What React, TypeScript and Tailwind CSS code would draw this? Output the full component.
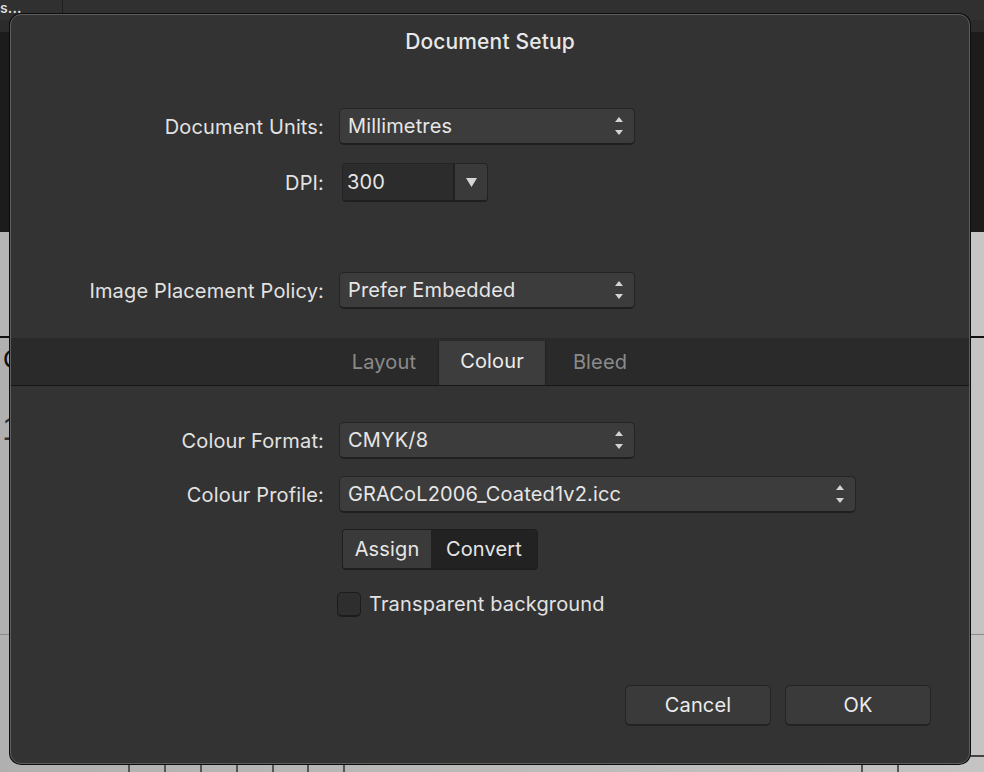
import React from 'react';

const font = "font-['Inter','Noto_Sans',sans-serif]";

function UpDown() {
  return (
    <svg width="8" height="18" viewBox="0 0 8 18" className="shrink-0">
      <polygon points="4,0 8,5 0,5" fill="#d4d4d4" />
      <polygon points="0,13 8,13 4,18" fill="#d4d4d4" />
    </svg>
  );
}

function Select({ value, width }: { value: string; width: string }) {
  return (
    <div
      className={`${width} h-[37px] flex items-center justify-between pl-[8px] pr-[11px] rounded-[5px] bg-[#3c3c3c] border border-[#242424] border-b-[2px] border-b-[#1f1f1f] text-[#e6e6e6]`}
    >
      <span>{value}</span>
      <UpDown />
    </div>
  );
}

function Row({ label, children }: { label: string; children: React.ReactNode }) {
  return (
    <div className="flex items-center gap-[15px]">
      <div className="w-[313px] text-right text-[#e2e2e2]">{label}</div>
      {children}
    </div>
  );
}

function Tab({ label, active }: { label: string; active?: boolean }) {
  return (
    <div
      className={`w-[108px] flex items-center justify-center ${
        active
          ? 'self-end h-[44px] pb-[4px] bg-[#3d3d3d] text-[#ececec] border-x border-[#222]'
          : 'h-full text-[#8a8a8a]'
      }`}
    >
      {label}
    </div>
  );
}

function Backdrop() {
  const cells = [128, 164, 200, 236, 272, 307, 343, 861, 897];
  return (
    <div className="flex flex-col h-[772px] w-[984px] overflow-hidden">
      <div className="h-[20px] bg-[#303030] flex">
        <div className="w-[63px] border-r border-[#1e1e1e] text-[#dedede] text-[14px] font-semibold leading-[16px]">
          s...
        </div>
      </div>
      <div className="h-[12px] bg-[#2b2b2b]" />
      <div className="h-[200px] bg-[#1c1c1c]" />
      <div className="h-[106px] bg-gradient-to-r from-[#b4b4b4] to-[#c6c6c6] border-b-[2px] border-[#111]" />
      <div className="flex-1 relative bg-gradient-to-r from-[#b0b0b0] to-[#c4c4c4]">
        <div className="pl-[3px] pt-[2px] text-[26px] text-[#111] font-['Liberation_Sans',sans-serif]">C</div>
        <div className="pl-[2px] pt-[24px] text-[34px] text-[#333] font-['Liberation_Sans',sans-serif]">1</div>
        <div className="mt-[180px] h-[1px] bg-[#8a8a8a]" />
        <div className="absolute left-0 right-0 top-[427px] h-[10px]">
          {cells.map((x) => (
            <div key={x} className="absolute top-0 bottom-0 w-[2px] bg-[#555]" style={{ left: x }} />
          ))}
        </div>
        <div className="absolute right-0 top-[417px] w-[16px] h-[2px] bg-[#444]" />
      </div>
    </div>
  );
}

export default function App() {
  return (
    <div className={`relative w-[984px] h-[772px] overflow-hidden ${font} text-[20px] tracking-[0.15px]`}>
      <Backdrop />

      {/* Dialog */}
      <div className="absolute left-[10px] top-[14px] w-[960px] h-[750px] rounded-[11px] bg-[#333333] border border-[#5e5e5e] shadow-[0_0_0_1px_#0d0d0d] flex flex-col overflow-hidden">
        <div className="pt-[15px] h-[40px] leading-[24px] text-center text-[#e8e8e8] text-[21px] font-medium">
          Document Setup
        </div>

        <div className="mt-[53px]">
          <Row label="Document Units:">
            <Select value="Millimetres" width="w-[296px]" />
          </Row>
        </div>

        <div className="mt-[18px]">
          <Row label="DPI:">
            <div className="ml-[3px] w-[146px] h-[39px] flex rounded-[4px] border border-[#232323] border-b-[2px] border-b-[#1f1f1f] overflow-hidden">
              <div className="flex-1 bg-[#2c2c2c] border-r-[2px] border-[#202020] flex items-center pl-[4px] text-[#e6e6e6]">
                300
              </div>
              <div className="w-[32px] bg-[#3a3a3a] flex items-center justify-center">
                <svg width="11" height="9" viewBox="0 0 11 9">
                  <polygon points="0,0 11,0 5.5,9" fill="#d6d6d6" />
                </svg>
              </div>
            </div>
          </Row>
        </div>

        <div className="mt-[70px]">
          <Row label="Image Placement Policy:">
            <Select value="Prefer Embedded" width="w-[296px]" />
          </Row>
        </div>

        {/* Tabs */}
        <div className="mt-[29px] h-[48px] bg-[#2a2a2a] border-b border-[#161616] flex justify-center pl-[4px]">
          <Tab label="Layout" />
          <Tab label="Colour" active />
          <Tab label="Bleed" />
        </div>

        <div className="mt-[36px]">
          <Row label="Colour Format:">
            <Select value="CMYK/8" width="w-[296px]" />
          </Row>
        </div>

        <div className="mt-[17px]">
          <Row label="Colour Profile:">
            <Select value="GRACoL2006_Coated1v2.icc" width="w-[517px]" />
          </Row>
        </div>

        <div className="mt-[16px] flex">
          <div className="w-[328px]" />
          <div className="ml-[3px] h-[41px] flex rounded-[4px] border border-[#1e1e1e] border-b-[2px] overflow-hidden text-[#e6e6e6]">
            <div className="w-[88px] bg-[#3a3a3a] flex items-center justify-center">Assign</div>
            <div className="w-[106px] bg-[#222222] flex items-center justify-center">Convert</div>
          </div>
        </div>

        <div className="mt-[19px] flex items-center">
          <div className="w-[326px]" />
          <div className="w-[24px] h-[25px] rounded-[5px] bg-[#2e2e2e] border border-[#1c1c1c] border-b-[2px]" />
          <span className="ml-[8px] text-[#e2e2e2]">Transparent background</span>
        </div>

        <div className="mt-[66px] flex justify-end gap-[14px] pr-[38px]">
          <button className="w-[146px] h-[41px] rounded-[5px] bg-[#3a3a3a] border border-[#232323] border-b-[2px] text-[#ececec]">
            Cancel
          </button>
          <button className="w-[146px] h-[41px] rounded-[5px] bg-[#3a3a3a] border border-[#232323] border-b-[2px] text-[#ececec]">
            OK
          </button>
        </div>
      </div>
    </div>
  );
}
